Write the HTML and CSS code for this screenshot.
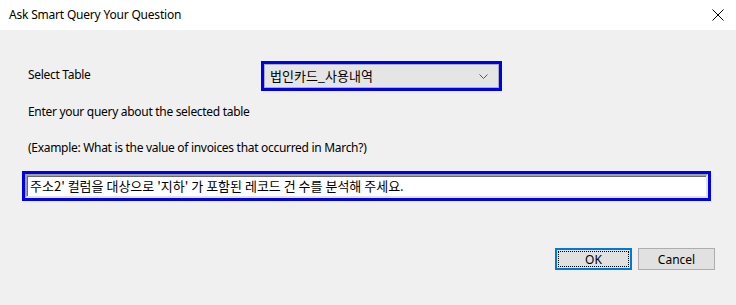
FILE: index.html
```html
<!DOCTYPE html>
<html>
<head>
<meta charset="utf-8">
<link rel="stylesheet" href="styles.css">
</head>
<body>
<div class="dialog">
  <div class="titlebar">
    <span class="title">Ask Smart Query Your Question</span>
    <svg class="close" width="12" height="12" viewBox="0 0 12 12"><path d="M0.5 0.5 L11.5 11.5 M11.5 0.5 L0.5 11.5" stroke="#000" stroke-width="1" fill="none"/></svg>
  </div>
  <div class="content">
    <div class="row-select">
      <span class="label label-select">Select Table</span>
      <div class="combo-focus">
        <div class="combo">
          <span class="combo-text">법인카드_사용내역</span>
          <svg class="chevron" width="9" height="5" viewBox="0 0 9 5"><path d="M0.5 0.5 L4.5 4.5 L8.5 0.5" stroke="#555" stroke-width="1" fill="none"/></svg>
        </div>
      </div>
    </div>
    <div class="label label-query">Enter your query about the selected table</div>
    <div class="label label-example">(Example: What is the value of invoices that occurred in March?)</div>
    <div class="input-focus">
      <div class="input-bevel">
        <div class="input">주소2' 컬럼을 대상으로 '지하' 가 포함된 레코드 건 수를 분석해 주세요.</div>
      </div>
    </div>
    <div class="buttons">
      <button class="btn btn-ok"><span class="btn-inner">OK</span></button>
      <button class="btn">Cancel</button>
    </div>
  </div>
</div>
</body>
</html>
```

FILE: styles.css
```css
html, body {
  margin: 0;
  padding: 0;
}
body {
  width: 736px;
  height: 305px;
  background: #f0f0f0;
  font-family: "Noto Sans", "Noto Sans CJK KR", sans-serif;
  font-size: 12px;
  color: #000;
  overflow: hidden;
}
.dialog {
  display: flex;
  flex-direction: column;
}
.titlebar {
  height: 30px;
  background: #fff;
  display: flex;
  align-items: center;
  justify-content: space-between;
  padding: 0 12px 0 9px;
}
.title {
  font-size: 12px;
  line-height: 16px;
  letter-spacing: -0.2px;
}
.close {
  display: block;
}
.content {
  display: flex;
  flex-direction: column;
  padding: 31px 0 0 28px;
}
.row-select {
  display: flex;
  align-items: center;
  height: 30px;
}
.label {
  line-height: 16px;
  letter-spacing: -0.3px;
}
.label-select {
  width: 233px;
  margin-top: -3px;
}
.combo-focus {
  width: 235px;
  height: 24px;
  border: 3px solid #0000f0;
}
.combo {
  height: 22px;
  border: 1px solid #adadad;
  background: #e5e5e5;
  display: flex;
  align-items: center;
  justify-content: space-between;
  padding: 0 10px 0 5px;
}
.combo-text {
  font-family: "Noto Sans CJK KR", "Noto Sans", sans-serif;
  font-size: 13px;
  line-height: 16px;
}
.chevron {
  display: block;
}
.label-query {
  margin-top: 13px;
}
.label-example {
  margin-top: 20px;
}
.input-focus {
  margin: 15px 0 0 -6px;
  width: 683px;
  height: 24px;
  border: 3px solid #0000f0;
}
.input-bevel {
  height: 20px;
  border: 2px solid;
  border-color: #a0a0a0 #e3e3e3 #e3e3e3 #a0a0a0;
  background: #fff;
  box-shadow: inset 1px 1px 0 #696969;
}
.input {
  padding: 1px 0 0 3px;
  font-family: "Noto Sans CJK KR", "Noto Sans", sans-serif;
  font-size: 13px;
  line-height: 17px;
  white-space: nowrap;
}
.buttons {
  display: flex;
  gap: 6px;
  margin: 47px 0 0 527px;
}
.btn {
  width: 77px;
  height: 22px;
  margin: 0;
  padding: 0;
  background: #e1e1e1;
  border: 1px solid #adadad;
  font-family: "Noto Sans", sans-serif;
  font-size: 12px;
  color: #000;
  display: flex;
  align-items: center;
  justify-content: center;
}
.btn-ok {
  border: 2px solid #0078d7;
  padding: 1px;
}
.btn-inner {
  flex: 1;
  align-self: stretch;
  display: flex;
  align-items: center;
  justify-content: center;
  border: 1px dotted #000;
}
```
